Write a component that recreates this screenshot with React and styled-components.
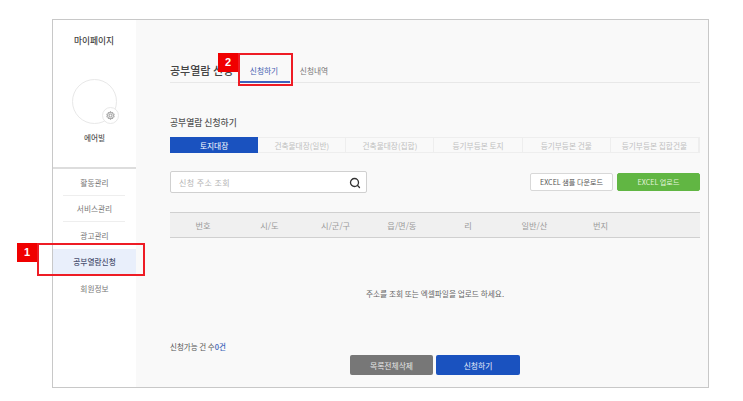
import React from 'react';
import styled, {createGlobalStyle} from 'styled-components';
import {Search} from 'lucide-react';

const GlobalStyle = createGlobalStyle`
    html, body {
        margin: 0;
        background: #fff;
    }
    * {
        box-sizing: border-box;
    }
    body {
        font-family: "Noto Sans CJK KR", "Noto Sans", sans-serif;
        color: #555;
    }
`;

const Page = styled.div`
    width: 743px;
    height: 401px;
    padding: 19px 34px 13px 52px;
    position: relative;
    overflow: hidden;
`;

const Frame = styled.div`
    display: flex;
    height: 369px;
    border: 1px solid #c8c8c8;
`;

const Sidebar = styled.aside`
    width: 83px;
    flex: none;
    background: #fff;
    display: flex;
    flex-direction: column;
`;

const Profile = styled.div`
    height: 149px;
    border-bottom: 2px solid #ddd;
    display: flex;
    flex-direction: column;
    align-items: center;
    padding-top: 14px;
`;

const SideTitle = styled.h2`
    margin: 0 1px 0 0;
    font-size: 8.7px;
    line-height: 13px;
    font-weight: 500;
    color: #444;
`;

const Avatar = styled.div`
    width: 45px;
    height: 45px;
    margin-top: 32px;
    margin-right: 1px;
    border: 1px solid #e8e8e8;
    border-radius: 50%;
    position: relative;
`;

const GearBadge = styled.span`
    position: absolute;
    right: -3px;
    bottom: -1px;
    width: 17px;
    height: 17px;
    background: #fff;
    border: 1px solid #e8e8e8;
    border-radius: 50%;
    display: grid;
    place-items: center;
`;

const UserName = styled.div`
    margin-top: 8px;
    font-size: 7.6px;
    line-height: 12px;
    font-weight: 500;
    color: #555;
`;

const Menu = styled.ul`
    list-style: none;
    margin: 0;
    padding: 0;
`;

const MenuItem = styled.li`
    height: 26.5px;
    display: flex;
    align-items: center;
    justify-content: center;
    font-size: 7.7px;
    position: relative;
    color: ${p => (p.$active ? '#4a5170' : '#777')};
    background: ${p => (p.$active ? '#e9effb' : 'transparent')};
    font-weight: ${p => (p.$active ? 500 : 400)};

    &::after {
        content: '';
        display: ${p => (p.$line ? 'block' : 'none')};
        position: absolute;
        left: 10px;
        right: 11px;
        bottom: 0;
        height: 1px;
        background: #eee;
    }
`;

const Main = styled.main`
    flex: 1;
    background: #f9f9f9;
    padding: 33px 8px 0 34px;
    display: flex;
    flex-direction: column;
`;

const TitleRow = styled.div`
    display: flex;
    align-items: flex-end;
    height: 30px;
    border-bottom: 1px solid #e8e8e8;
`;

const PageTitle = styled.h1`
    margin: 0;
    width: 70px;
    font-size: 11px;
    line-height: 24px;
    font-weight: 500;
    color: #444;
    white-space: nowrap;
    overflow: hidden;
`;

const PageTab = styled.div`
    width: 50px;
    height: 22px;
    margin-bottom: -1px;
    padding-right: 2px;
    font-size: 7.7px;
    line-height: 20px;
    text-align: center;
    color: ${p => (p.$active ? '#3f5eb0' : '#777')};
    border-bottom: ${p => (p.$active ? '2px solid #3f62bd' : '0')};
`;

const SectionTitle = styled.h3`
    margin: 32px 0 0;
    font-size: 8.8px;
    line-height: 15px;
    font-weight: 500;
    color: #555;
`;

const Ledger = styled.div`
    display: grid;
    grid-template-columns: repeat(6, 1fr);
    height: 16px;
    margin-top: 7px;
    border: 1px solid #eee;
    border-left: 0;
`;

const LedgerTab = styled.div`
    display: flex;
    align-items: center;
    justify-content: center;
    margin: -1px 0;
    font-size: 7.7px;
    white-space: nowrap;
    color: ${p => (p.$active ? '#fff' : '#c0c0c0')};
    background: ${p => (p.$active ? '#1a52bf' : 'transparent')};
    border-right: ${p => (p.$active ? '0' : '1px solid #eee')};
`;

const Toolbar = styled.div`
    display: flex;
    align-items: center;
    margin-top: 18px;
    height: 22px;
`;

const SearchBox = styled.div`
    width: 197px;
    height: 22px;
    background: #fff;
    border: 1px solid #d0d0d0;
    border-radius: 2px;
    display: flex;
    align-items: center;
    justify-content: space-between;
    padding: 1px 5px 0 8px;
    font-size: 8px;
    letter-spacing: 0.4px;
    color: #b4b4b4;
`;

const ExcelButton = styled.button`
    height: 18px;
    width: 83px;
    margin-left: ${p => (p.$green ? '4px' : 'auto')};
    padding: 0;
    border: 1px solid ${p => (p.$green ? '#61b643' : '#d8d8d8')};
    border-radius: 2px;
    background: ${p => (p.$green ? '#61b643' : '#fff')};
    color: ${p => (p.$green ? '#e3f3dc' : '#555')};
    font-family: inherit;
    font-size: 7.1px;
    white-space: nowrap;
`;

const TableHead = styled.div`
    display: grid;
    grid-template-columns: repeat(8, 1fr);
    align-items: center;
    height: 26px;
    margin-top: 19px;
    background: #f0f0f0;
    border-top: 1px solid #d0d0d0;
    border-bottom: 1px solid #d0d0d0;
    font-size: 8.2px;
    color: #9a9a9a;
    text-align: center;
`;

const EmptyNote = styled.div`
    height: 103px;
    display: flex;
    align-items: center;
    justify-content: center;
    font-size: 7.7px;
    color: #666;
    padding-top: 7px;
`;

const CountLine = styled.div`
    font-size: 7.5px;
    line-height: 12px;
    color: #555;
    b {
        font-weight: 500;
        color: #3a62b8;
    }
`;

const Actions = styled.div`
    display: flex;
    justify-content: center;
    gap: 3px;
    margin-top: 2px;
`;

const ActionButton = styled.button`
    width: ${p => (p.$gray ? '83px' : '84px')};
    height: 20px;
    padding: 0;
    border: 0;
    border-radius: 2px;
    background: ${p => (p.$gray ? '#777' : '#1a52bf')};
    color: ${p => (p.$gray ? '#e6e6e6' : '#e8eefb')};
    font-family: inherit;
    font-size: 7.8px;
`;

const RedBox = styled.div`
    position: absolute;
    left: ${p => p.$x}px;
    top: ${p => p.$y}px;
    width: ${p => p.$w}px;
    height: ${p => p.$h}px;
    border: 2px solid #ee1c25;
`;

const RedTag = styled.span`
    position: absolute;
    left: -22px;
    top: -2px;
    width: 20px;
    height: 19px;
    background: #f00000;
    color: #fff;
    font-family: "Liberation Sans", sans-serif;
    font-size: 11px;
    font-weight: 700;
    line-height: 19px;
    text-align: center;
`;

const menuItems = ['활동관리', '서비스관리', '광고관리', '공부열람신청', '회원정보'];
const ledgers = ['토지대장', '건축물대장(일반)', '건축물대장(집합)', '등기부등본 토지', '등기부등본 건물', '등기부등본 집합건물'];
const columns = ['번호', '시/도', '시/군/구', '읍/면/동', '리', '일반/산', '번지', ''];

const GearIcon = () => (
    <svg width="9" height="9" viewBox="0 0 24 24" fill="none" stroke="#aaa" strokeWidth="3">
        <circle cx="12" cy="12" r="4" />
        <path d="M12 2l2 3 3.5-.8.8 3.5 3.2 1.3-1.5 3 1.5 3-3.2 1.3-.8 3.5-3.5-.8-2 3-2-3-3.5.8-.8-3.5-3.2-1.3 1.5-3-1.5-3 3.2-1.3.8-3.5 3.5.8z" />
    </svg>
);

const App = () => (
    <Page>
        <GlobalStyle />
        <Frame>
            <Sidebar>
                <Profile>
                    <SideTitle>마이페이지</SideTitle>
                    <Avatar>
                        <GearBadge>
                            <GearIcon />
                        </GearBadge>
                    </Avatar>
                    <UserName>에어빌</UserName>
                </Profile>
                <Menu>
                    {menuItems.map((item, i) => (
                        <MenuItem key={item} $active={i === 3} $line={i < 2}>
                            {item}
                        </MenuItem>
                    ))}
                </Menu>
            </Sidebar>
            <Main>
                <TitleRow>
                    <PageTitle>공부열람 신청</PageTitle>
                    <PageTab $active>신청하기</PageTab>
                    <PageTab>신청내역</PageTab>
                </TitleRow>
                <SectionTitle>공부열람 신청하기</SectionTitle>
                <Ledger>
                    {ledgers.map((item, i) => (
                        <LedgerTab key={item} $active={i === 0}>
                            {item}
                        </LedgerTab>
                    ))}
                </Ledger>
                <Toolbar>
                    <SearchBox>
                        신청 주소 조회
                        <Search size={12} color="#333" strokeWidth={2.6} />
                    </SearchBox>
                    <ExcelButton>EXCEL 샘플 다운로드</ExcelButton>
                    <ExcelButton $green>EXCEL 업로드</ExcelButton>
                </Toolbar>
                <TableHead>
                    {columns.map((col, i) => (
                        <span key={i}>{col}</span>
                    ))}
                </TableHead>
                <EmptyNote>주소를 조회 또는 엑셀파일을 업로드 하세요.</EmptyNote>
                <CountLine>
                    신청가능 건 수<b>0건</b>
                </CountLine>
                <Actions>
                    <ActionButton $gray>목록전체삭제</ActionButton>
                    <ActionButton>신청하기</ActionButton>
                </Actions>
            </Main>
        </Frame>
        <RedBox $x={37} $y={243} $w={108} $h={33}>
            <RedTag>1</RedTag>
        </RedBox>
        <RedBox $x={238} $y={53} $w={55} $h={33}>
            <RedTag>2</RedTag>
        </RedBox>
    </Page>
);

export default App;
